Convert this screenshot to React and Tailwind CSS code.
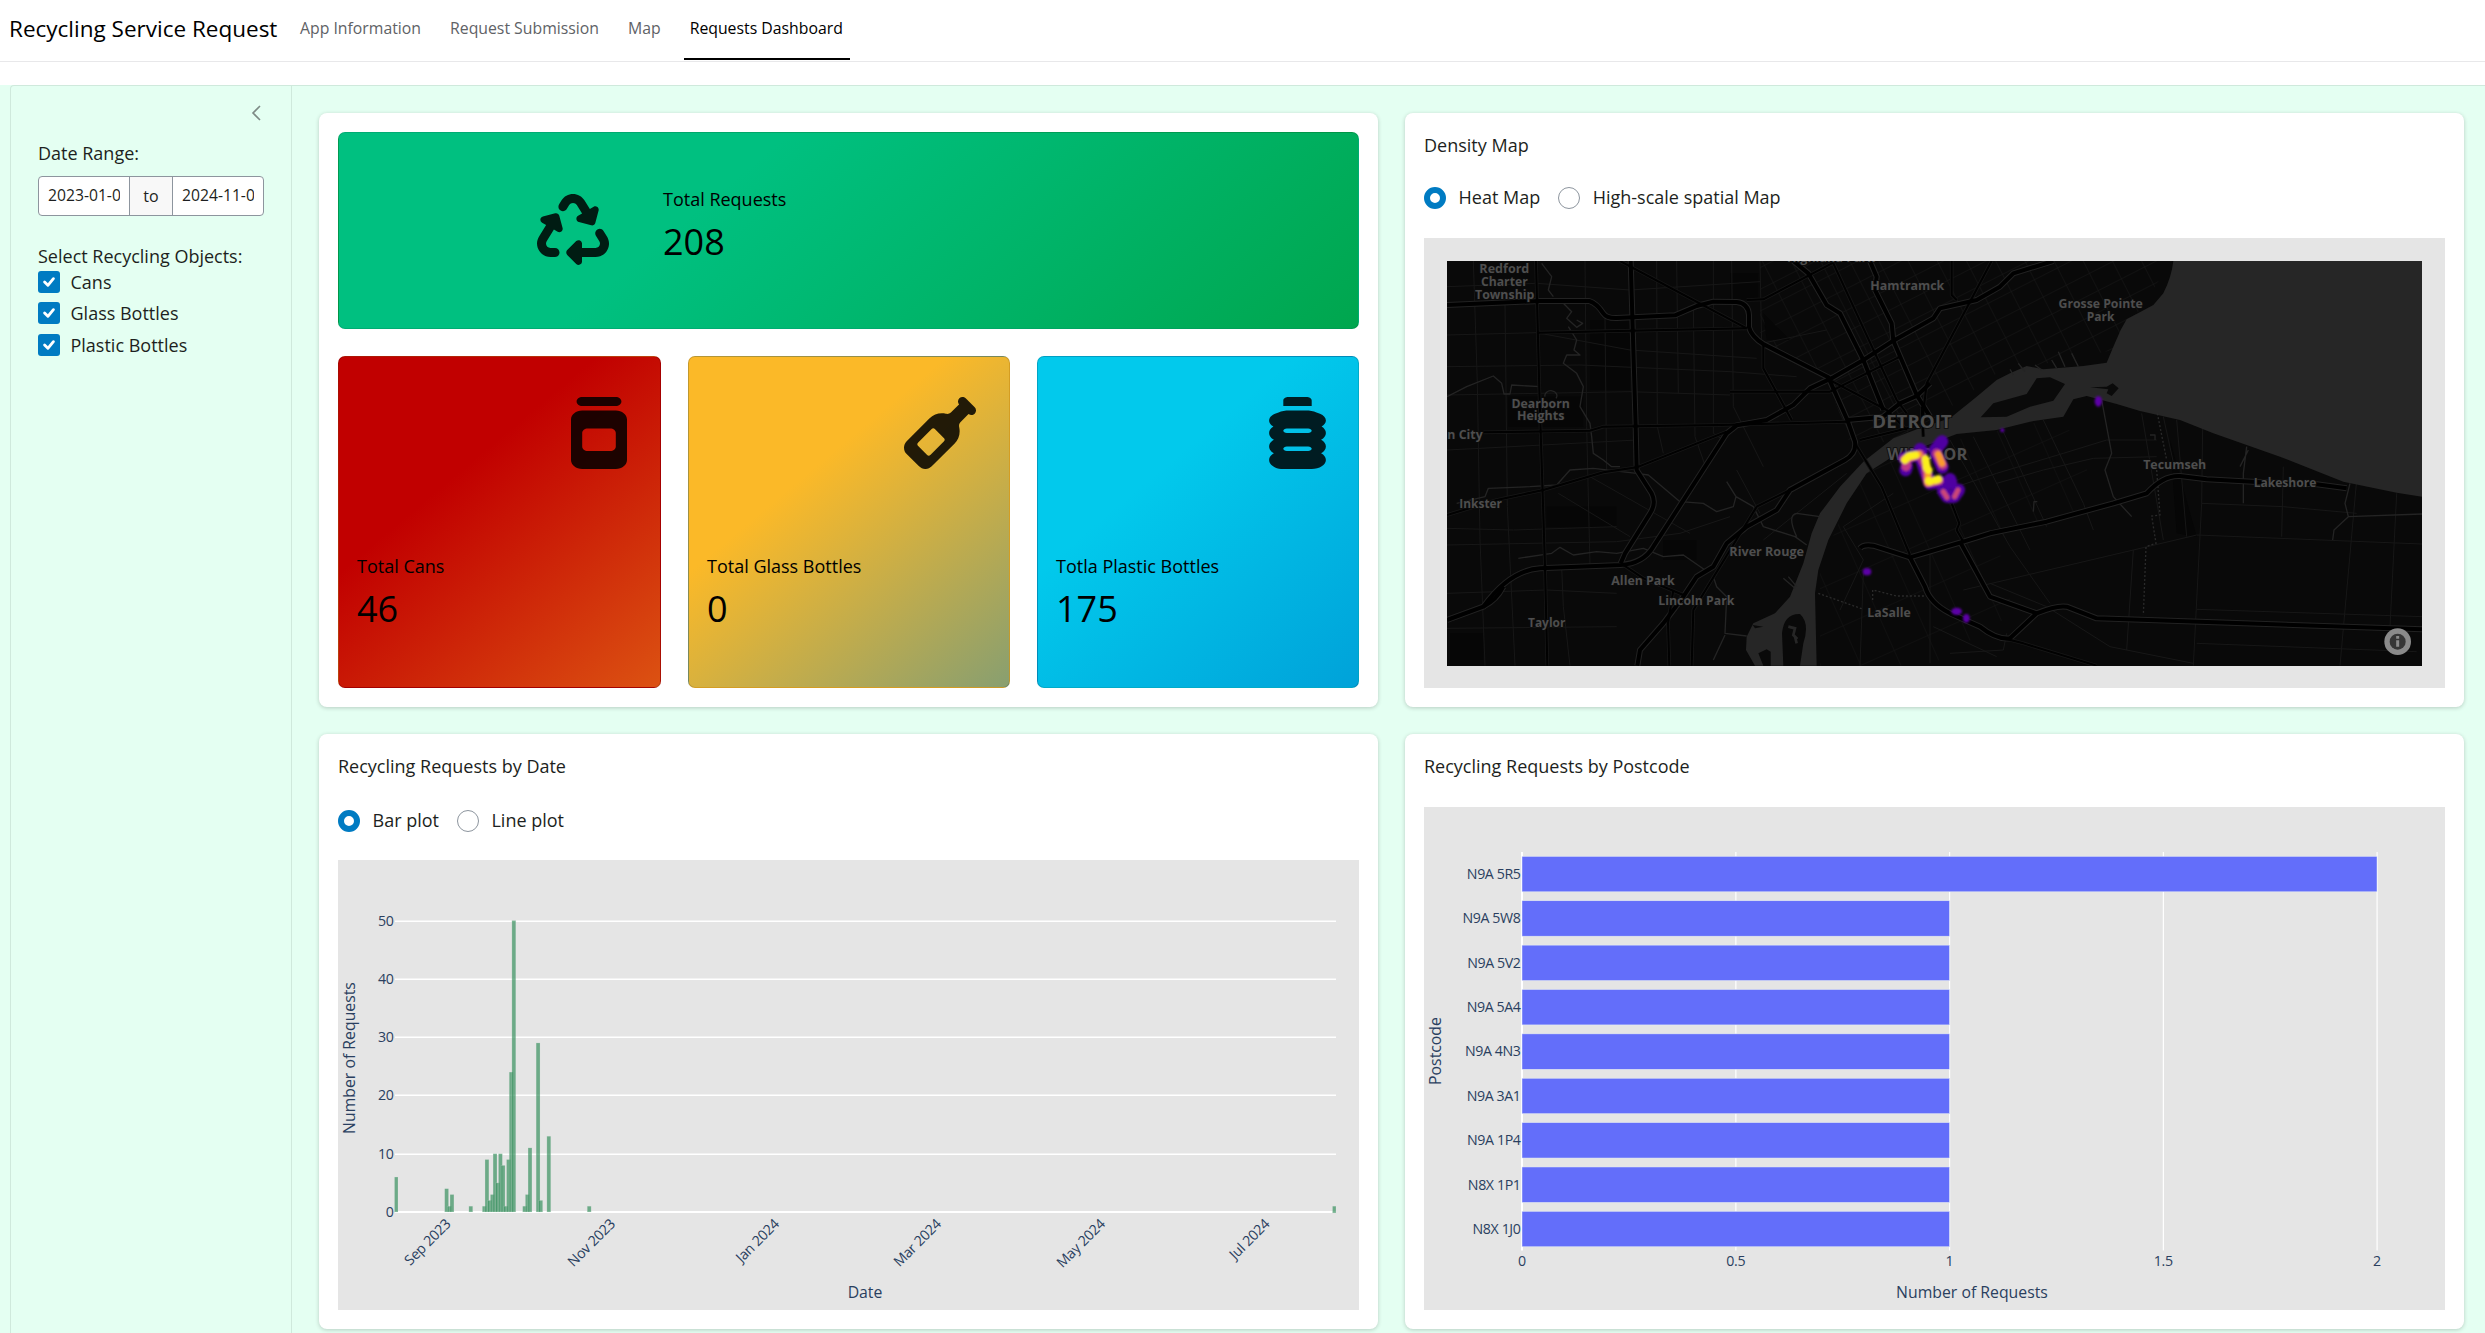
import React from "react";
import { FaRecycle, FaJar, FaWineBottle, FaBottleWater } from "react-icons/fa6";

const dayBars = [
  [19, 4], [20, 1], [21, 3], [28, 1], [33, 1], [34, 9], [35, 2], [36, 3], [37, 10],
  [38, 5], [39, 10], [40, 8], [41, 1], [42, 9], [43, 24], [44, 50], [48, 1], [49, 3],
  [50, 11], [53, 29], [54, 2], [57, 13], [72, 1],
];
const months = [["Sep 2023", 451], ["Nov 2023", 615.5], ["Jan 2024", 779.5], ["Mar 2024", 941.5], ["May 2024", 1105.5], ["Jul 2024", 1270]];
const postcodes = ["N9A 5R5", "N9A 5W8", "N9A 5V2", "N9A 5A4", "N9A 4N3", "N9A 3A1", "N9A 1P4", "N8X 1P1", "N8X 1J0"];

const INK = "#2a3f5f";

function Radio({ label, on }) {
  return (
    <div className="flex items-center">
      {on ? (
        <span className="h-[22px] w-[22px] rounded-full border-[6px] border-[#007bc2] bg-white" />
      ) : (
        <span className="h-[22px] w-[22px] rounded-full border border-[#8d959e] bg-white" />
      )}
      <span className="relative -top-px ml-[12.5px]">{label}</span>
    </div>
  );
}

function Check({ label }) {
  return (
    <div className="flex h-[31.5px] items-center">
      <span className="flex h-[22px] w-[22px] items-center justify-center rounded-[3px] bg-[#007bc2]">
        <svg viewBox="0 0 20 20" className="h-[22px] w-[22px]" fill="none" stroke="#fff" strokeWidth="2.6" strokeLinecap="round" strokeLinejoin="round">
          <path d="M6 10l3 3 5-6" />
        </svg>
      </span>
      <span className="ml-[10.5px]">{label}</span>
    </div>
  );
}

function Card({ children }) {
  return <section className="flex min-w-0 flex-col rounded-lg bg-white px-[19px] pb-[19px] shadow-[0_1px_4px_rgba(0,0,0,0.2)]">{children}</section>;
}

function SmallBox({ label, value, icon, tone }) {
  return (
    <div className={"flex min-w-0 flex-col justify-between rounded-[7px] border border-black/15 px-[18px] pb-[57px] pt-[40px] text-black " + tone}>
      <div className="flex h-[72px] justify-end pr-[15px] opacity-85">{icon}</div>
      <div>
        <div className="leading-[26px]">{label}</div>
        <div className="mt-[9px] text-[36px] leading-[42px]">{value}</div>
      </div>
    </div>
  );
}

function DateChart() {
  const y = (v) => 1212 - v * 5.83;
  return (
    <svg viewBox="338 860 1021 450" className="h-[450px] w-[1021px]">
      <rect x="338" y="860" width="1021" height="450" fill="#e5e5e5" />
      {[10, 20, 30, 40, 50].map((v) => (
        <rect key={v} x="395" y={Math.round(y(v)) - 0.5} width="941" height="1.5" fill="#fff" />
      ))}
      <rect x="395" y="1211" width="941" height="2" fill="#fff" />
      <g fill="#2e8b57" fillOpacity="0.66" stroke="#e5e5e5" strokeOpacity="0.35" strokeWidth="0.6">
        <rect x="394.5" y={y(6)} width="3.5" height="35" />
        {dayBars.map(([d, v]) => (
          <rect key={d} x={395.5 + d * 2.69 - 1.95} y={y(v)} width="3.9" height={v * 5.83} />
        ))}
        <rect x="1332.5" y={y(1)} width="3.5" height="6.8" />
      </g>
      <g fill={INK} fontSize="14.2" letterSpacing="-0.3" textAnchor="end">
        {[0, 10, 20, 30, 40, 50].map((v) => (
          <text key={v} x="393.5" y={y(v) + 5}>{v}</text>
        ))}
        {months.map(([m, x]) => (
          <text key={m} transform={`translate(${x + 0.5} 1225) rotate(-45)`}>{m}</text>
        ))}
      </g>
      <g fill={INK} fontSize="15.8" textAnchor="middle">
        <text x="865" y="1298">Date</text>
        <text transform="translate(355 1058) rotate(-90)">Number of Requests</text>
      </g>
    </svg>
  );
}

function PostcodeChart() {
  return (
    <svg viewBox="1424 807 1021 503" className="h-[503px] w-[1021px]">
      <rect x="1424" y="807" width="1021" height="503" fill="#e5e5e5" />
      {[0, 1, 2, 3, 4].map((i) => (
        <rect key={i} x={1522 + i * 213.75 - (i ? 0.5 : 1)} y="852" width={i ? 1.2 : 2} height="398.500" fill="#fff" />
      ))}
      {postcodes.map((p, i) => (
        <g key={p}>
          <rect x="1522" y={856.4 + i * 44.37} width={i ? 427.5 : 855} height="35.4" fill="#636efa" stroke="#e5ecf6" strokeWidth="0.5" />
          <text x="1520.5" y={879 + i * 44.37} textAnchor="end" fontSize="14.2" letterSpacing="-0.4" fill={INK}>{p}</text>
        </g>
      ))}
      <g fill={INK} fontSize="14.2" letterSpacing="-0.3" textAnchor="middle">
        {["0", "0.5", "1", "1.5", "2"].map((t, i) => (
          <text key={t} x={1522 + i * 213.75} y="1266">{t}</text>
        ))}
      </g>
      <g fill={INK} fontSize="15.8" textAnchor="middle">
        <text x="1972" y="1298">Number of Requests</text>
        <text transform="translate(1441 1051) rotate(-90)">Postcode</text>
      </g>
    </svg>
  );
}

const highways = [
  "M51 195L330 183L478 183Q500 190 520 220Q530 235 560 234L735 226L800 198L850 185L920 186Q955 190 957 225L957 262Q965 290 1000 312L1195 412L1252 540L1275 605Q1280 640 1245 660L1080 750L1040 810L950 860L890 910L850 980L800 1010L760 1070L700 1150L630 1230L622 1277",
  "M602 63L617 560L620 690L665 760Q680 790 660 820L585 940L572 970",
  "M51 1140L160 1100Q240 990 330 985L572 975Q640 970 670 920L890 580L920 556L1010 540L1090 495L1140 445L1210 412L1300 360L1390 302L1510 235L1530 205L1640 180L1710 140L1750 100L1870 63",
  "M1090 63L1135 100L1190 195L1230 220L1300 360L1360 510",
  "M1320 63L1340 110L1335 150L1385 250L1390 302L1460 465L1500 530",
  "M1252 540L1360 530L1410 490L1460 468L1500 430",
  "M1290 925Q1300 912 1330 917L1440 952L1600 905L1680 880L1850 845L2050 790L2150 760Q2200 705 2250 708L2330 718L2480 726L2660 733L2750 745",
  "M1440 952L1485 1040Q1500 1090 1560 1120L1650 1160Q1700 1200 1740 1195L1820 1120Q1880 1095 1910 1100L2000 1135L2976 1168",
  "M1590 905L1680 1070L1820 1120",
  "M160 1100Q200 1080 220 1040",
];
const roads = [
  "M318 63L328 450L345 980L352 1277", "M51 825L200 780L340 750L520 697L620 682L890 575",
  "M160 577L480 572L520 560L870 555L1250 545", "M322 278L950 265", "M570 63L950 265", "M1190 415L1370 510L1430 570",
  "M950 180L1000 178L1210 68", "M1000 312L1000 385L1085 540", "M1210 70L1400 480L1430 520", "M1475 560L1490 430L1685 63",
  "M1565 63L1565 165L1580 180", "M900 455L1200 455L1410 350", "M1275 610L1355 740L1440 945", "M1565 790L1588 850L1580 870L1600 905",
  "M718 1277L714 1150L730 1050", "M785 1277L790 1110L980 800L1080 750", "M1720 1195L1780 1210L2000 1277", "M580 975L640 1015L760 1065",
  "M1480 590L1475 500", "M1290 600L1450 560",
];
const thinRoads = [
  "M130 63L142 430L150 900L165 1277", "M225 190L232 800L255 1277", "M395 980L400 1100L420 1277", "M465 63L470 560L480 980",
  "M525 234L530 700", "M680 63L682 560L700 640", "M740 63L745 460", "M790 200L795 590L830 690", "M850 63L850 580L880 600",
  "M905 63L910 500L1000 680", "M990 63L995 310L1190 270", "M51 285L320 278L600 330L980 355", "M51 380L450 375L900 395L1100 410", "M51 465L600 455L900 465",
  "M51 630L150 625L620 600", "M51 865L250 870L560 860", "M51 915L560 905L750 880L900 830", "M51 1060L350 1050L560 1060",
  "M51 1165L560 1160", "M51 140L320 130L600 150L990 125", "M385 760L600 890", "M480 710L780 880", "M920 690L990 820",
  "M1560 600L1740 920L1860 1090", "M1630 590L1800 930", "M1720 575L1850 860", "M1840 540L1960 790L1990 870", "M1700 730L1840 690L1990 655L2180 650",
  "M1520 760L1700 700L1900 640L2030 600L2180 600", "M1600 1050L2110 930L2300 885L2976 912", "M2110 930L2090 1230", "M2318 560L2315 790L2290 1277",
  "M2300 1108L2976 1130", "M2560 680L2555 890", "M2315 790L2560 800L2780 820", "M2780 720L2730 1277", "M2900 760L2880 1160", "M2300 1210L2960 1235",
  "M2240 540L2270 890", "M2200 530L2235 690", "M2135 520L2200 900", "M1500 940L1500 1270", "M1300 1000L1290 1277", "M1390 760L1240 860L1300 960L1230 1110",
  "M1510 1160L1700 1250", "M1680 1030L1850 1100L2040 1220L2290 1270", "M1560 1240L1720 1230L1730 1180", "M1000 900L1250 700",
];
const river = "M2230 63Q2225 110 2200 160L2170 195L2090 238L2072 270L2050 320L2030 368L1960 378L1840 388L1790 378L1740 400L1700 420L1640 470L1560 535L1480 560L1390 595L1300 665L1230 740L1170 820L1145 880L1120 970L1080 1070L1035 1120L970 1150L950 1190L948 1230L975 1277L1000 1277L985 1240L1010 1228L1022 1235L1022 1277L1060 1277L1056 1180Q1062 1120 1110 1122Q1140 1150 1120 1210L1110 1277L1160 1277L1155 1060L1165 990L1195 900L1250 790L1310 700L1380 655L1480 620L1580 582L1700 570L1800 545L1900 530L1930 478L1970 468L2060 492L2130 513L2250 540L2350 580L2550 650L2740 725L2900 758L2976 770L2976 63Z";
const islands = ["M1652 532L1690 490L1790 462L1820 415L1860 412L1905 432L1870 482L1800 500L1730 530Z", "M1980 442L2030 440L2048 430L2066 445L2045 468L2030 460L2035 448Z", "M968 1155L1000 1160L975 1165Z"];
const streams = [
  "M335 70L365 110L355 150L370 170", "M400 190L425 215L410 235L440 262L458 250L440 240M415 260L440 300L432 330L450 345L410 345L400 370L440 400L460 440L450 500L480 550L485 590L490 640L520 660L545 680L570 680",
  "M51 470L110 440L190 408L215 430L222 462L240 462L245 435L330 440M345 470A18 15 0 1 1 378 475",
  "M80 790L165 770L175 745L300 740L380 735L420 690L490 685L620 700L655 705L750 785L820 790L860 815L910 800L918 770L890 725M918 770L970 800L1000 860L1095 890L1130 915M1170 830L1100 820Q1070 825 1100 890",
  "M265 955L365 940L390 922L430 945L500 935L560 940L640 925L700 950L760 945L825 990M850 1010L860 1040L890 1070L885 1180L950 1188M885 1185L850 1260",
  "M2015 480L2045 640L2025 690L2050 770L2105 830", "M2450 620L2440 700L2440 790M2455 630L2430 680", "M2760 730L2745 790L2755 830L2712 870L2708 900M2755 830L2976 822",
  "M1885 335L1905 380M1925 340L1945 380M1865 360L1880 385M1815 375L1835 390M1765 370L1785 395M1740 388L1750 405", "M1810 815L1812 785L1822 785M2160 585L2175 585L2175 600", "M1060 1015L1095 1045M1075 1010L1100 1040",
];
const places = [
  ["Redford", 223, 100, 150], ["Charter", 223, 139, 140], ["Township", 224, 178, 178], ["Hamtramck", 1432, 149, 222], ["Grosse Pointe", 2012, 205, 253],
  ["Park", 2012, 244, 83], ["Dearborn", 332, 503, 175], ["Heights", 332, 541, 142], ["n City", 105, 598, 106], ["Inkster", 152, 805, 128],
  ["River Rouge", 1010, 948, 224], ["Allen Park", 639, 1036, 190], ["Lincoln Park", 799, 1095, 228], ["Taylor", 350, 1160, 112], ["LaSalle", 1377, 1132, 130],
  ["Tecumseh", 2234, 688, 189], ["Lakeshore", 2565, 741, 188], ["Highland Park", 1203, 66, 264],
];
const heat = {
  low: "M1423 655L1470 642L1485 690L1500 730L1530 725M1518 640L1537 682M1430 680L1427 690M1515 630L1536 605M1540 752L1552 770L1572 770L1586 750M1560 718L1563 728M1470 628L1475 632",
  mid: "M1423 657L1470 643L1488 680L1493 728L1527 722M1520 640L1538 676M1430 672L1428 680",
  rim: "M1540 755L1551 772M1574 770L1584 750",
  hot: "M1424 658L1467 643M1486 655L1494 688L1494 728L1525 720M1525 643L1536 670",
  max: "M1425 660L1436 648L1456 645M1487 658L1491 685L1496 690M1496 722L1500 724M1517 720L1524 717",
};

function DensityMap() {
  return (
    <svg viewBox="51 63 2925 1215" className="h-[405px] w-[975px] bg-[#090909]">
      <defs>
        <filter id="soft" x="-20%" y="-20%" width="140%" height="140%"><feGaussianBlur stdDeviation="3.5" /></filter>
        <pattern id="blocks" width="78" height="58" patternUnits="userSpaceOnUse" patternTransform="rotate(-27)">
          <path d="M0 0H78M0 0V58" stroke="#191919" strokeWidth="3" fill="none" />
        </pattern>
        <pattern id="south" width="110" height="130" patternUnits="userSpaceOnUse" patternTransform="rotate(-24)">
          <path d="M0 0H110M0 0V130" stroke="#151515" strokeWidth="3" fill="none" />
        </pattern>
      </defs>
      <path d="M990 63H2225L2050 330L1700 400L1480 560L1390 595L1270 640L1190 412L990 312Z" fill="url(#blocks)" />
      <path d="M1290 700L1480 620L1900 530L2020 800L1700 900L1750 1120L1500 1277H1170V980Z" fill="url(#south)" />
      <g fill="#060606">
        <path d="M235 470H460V560H235ZM350 800H560V860H350ZM480 240H600V450H480ZM900 100H985V180H900ZM2220 600L2300 890L2240 880ZM700 900H800V960H700ZM60 1180H160V1260H60ZM1000 220L1080 300L1010 300Z" />
      </g>
      <g fill="none" stroke="#171717" strokeWidth="3">{thinRoads.map((d) => <path key={d} d={d} />)}</g>
      <path d={river} fill="#262626" />
      <g fill="#0a0a0a">{islands.map((d) => <path key={d} d={d} />)}</g>
      <path d="M1075 1160l20 5-5 20 12 12M1095 1190l5 20" stroke="#262626" strokeWidth="8" fill="none" />
      <g fill="none" stroke="#242424" strokeWidth="4" strokeLinejoin="round">{streams.map((d) => <path key={d} d={d} />)}</g>
      <path d="M2182 520L2210 660M2180 690L2190 825L2165 828L2178 910L2148 920L2140 1125M1165 1060L1300 1108M1328 1080V1050L1400 1068H1490" fill="none" stroke="#2a2a2a" strokeWidth="4" strokeDasharray="6 6" />
      <g fill="none" strokeLinejoin="round">
        {highways.map((d) => <path key={d} d={d} stroke="#222" strokeWidth="18" />)}
        {roads.map((d) => <path key={d} d={d} stroke="#161616" strokeWidth="11" />)}
        {roads.map((d) => <path key={d} d={d} stroke="#010101" strokeWidth="6" />)}
        {highways.map((d) => <path key={d} d={d} stroke="#000" strokeWidth="12" />)}
      </g>
      <g fill="#4e4e4e" stroke="#0c0c0c" strokeWidth="5" paintOrder="stroke" textAnchor="middle" fontWeight="700" fontSize="39">
        {places.map(([t, x, y, w]) => <text key={t} x={x} y={y} textLength={w} lengthAdjust="spacingAndGlyphs">{t}</text>)}
        <g fontSize="54">
          <text x="1446" y="564" textLength="238" lengthAdjust="spacingAndGlyphs">DETROIT</text>
          <text x="1492" y="660" fontSize="48" textLength="240" lengthAdjust="spacingAndGlyphs">WINDSOR</text>
        </g>
      </g>
      <g fill="none" strokeLinecap="round" strokeLinejoin="round" filter="url(#soft)">
        <path d={heat.low} stroke="#4f02a2" strokeWidth="38" />
        <path d={heat.mid} stroke="#bd3786" strokeWidth="27" />
        <path d={heat.rim} stroke="#cc4778" strokeWidth="15" />
        <path d={heat.hot} stroke="#fb9a2d" strokeWidth="20" />
        <path d={heat.max} stroke="#fbf01f" strokeWidth="23" />
      </g>
      <g fill="#5c01a6" filter="url(#soft)">
        <ellipse cx="1311" cy="995" rx="13" ry="11" />
        <ellipse cx="2005" cy="484" rx="11" ry="16" />
        <ellipse cx="1580" cy="1114" rx="16" ry="11" />
        <ellipse cx="1609" cy="1135" rx="10" ry="13" />
        <circle cx="1717" cy="571" r="6" />
      </g>
      <circle cx="2903" cy="1205" r="40" fill="#8a8a8a" />
      <circle cx="2903" cy="1205" r="24" fill="#363636" />
      <path d="M2903 1188v8M2903 1201v19" stroke="#8a8a8a" strokeWidth="9" />
    </svg>
  );
}

export default function App() {
  return (
    <div className="h-[1333px] w-full overflow-hidden bg-white font-['Open_Sans',sans-serif] text-[18px] leading-[26px] text-[#1d1f21]">
      <header className="flex h-[62px] border-b border-[#e8e8ea] pl-[9px]">
        <h1 className="mt-[14px] mr-[9px] w-[276px] whitespace-nowrap text-[22.5px] leading-[30px] text-black">Recycling Service Request</h1>
        <nav className="flex gap-[17px] whitespace-nowrap text-[15.8px] leading-[26px] text-[#606266]">
          <span className="px-[6px] pt-[15px]">App Information</span>
          <span className="px-[6px] pt-[15px]">Request Submission</span>
          <span className="px-[6px] pt-[15px]">Map</span>
          <span className="h-[60px] w-[166px] border-b-2 border-black px-[6px] pt-[15px] text-black">Requests Dashboard</span>
        </nav>
      </header>
      <div className="mt-[23px] bg-[#e4fff2] pl-[10px]">
        <div className="flex h-[1248px] rounded-tl-[4px] border-l border-t border-[#cfe9dc]">
          <aside className="w-[281px] border-r border-[#cfe9dc] pl-[27px]">
            <div className="flex h-[53px] items-end justify-end pr-[30px]">
              <svg viewBox="0 0 10 16" className="mb-[18px] h-[16px] w-[10px]" fill="none" stroke="#7d8a85" strokeWidth="1.6"><path d="M9 1L2 8l7 7" /></svg>
            </div>
            <div className="pt-px">Date Range:</div>
            <div className="mt-[10px] flex h-[40px] w-[226px] overflow-hidden rounded-[4px] border border-[#8d959e] bg-white text-[15.7px] leading-[37px]">
              <div className="w-[90px] whitespace-nowrap px-[9px]"><div className="overflow-hidden">2023-01-01</div></div>
              <div className="w-[44px] border-x border-[#8d959e] bg-[#f8f8f8] text-center text-[16px] leading-[39px]">to</div>
              <div className="w-[90px] whitespace-nowrap px-[9px]"><div className="overflow-hidden">2024-11-01</div></div>
            </div>
            <div className="mt-[27px]">Select Recycling Objects:</div>
            <div className="-mt-[3px]">
              <Check label="Cans" />
              <Check label="Glass Bottles" />
              <Check label="Plastic Bottles" />
            </div>
          </aside>
          <main className="grid flex-1 grid-cols-[1059px_1059px] grid-rows-[594px_595px] gap-[27px] pl-[27px] pt-[27px]">
            <Card>
              <div className="mt-[19px] flex h-[197px] items-center rounded-[7px] border border-black/10 bg-[linear-gradient(140deg,#00c080_36%,#00a64e_100%)] pl-[198px] text-black">
                <FaRecycle className="-mt-[2px] h-[72px] w-[72px] opacity-85" />
                <div className="ml-[54px] -mt-[13px]">
                  <div>Total Requests</div>
                  <div className="mt-[9px] text-[36px] leading-[42px]">208</div>
                </div>
              </div>
              <div className="mt-[27px] grid flex-1 grid-cols-[323px_322px_322px] gap-[27px]">
                <SmallBox label="Total Cans" value="46" tone="bg-[linear-gradient(140deg,#c10000_36%,#dc5212_100%)]" icon={<FaJar preserveAspectRatio="none" className="h-[72px] w-[56px]" />} />
                <SmallBox label="Total Glass Bottles" value="0" tone="bg-[linear-gradient(140deg,#fbb928_36%,#889f70_100%)]" icon={<FaWineBottle className="h-[72px] w-[72px]" />} />
                <SmallBox label="Totla Plastic Bottles" value="175" tone="bg-[linear-gradient(140deg,#02c9ec_36%,#00a2d9_100%)]" icon={<FaBottleWater preserveAspectRatio="none" className="-mr-[8px] h-[72px] w-[71px]" />} />
              </div>
            </Card>
            <Card>
              <div className="mt-[19px]">Density Map</div>
              <div className="mt-[29px] flex h-[22px] gap-[18px]"><Radio on label="Heat Map" /><Radio label="High-scale spatial Map" /></div>
              <div className="mt-[29px] flex h-[450px] w-[1021px] items-start justify-center bg-[#e5e5e5] pt-[23px]">
                <DensityMap />
              </div>
            </Card>
            <Card>
              <div className="mt-[19px]">Recycling Requests by Date</div>
              <div className="mt-[31px] mb-[28px] flex h-[22px] gap-[18px]"><Radio on label="Bar plot" /><Radio label="Line plot" /></div>
              <DateChart />
            </Card>
            <Card>
              <div className="mt-[19px] mb-[28px]">Recycling Requests by Postcode</div>
              <PostcodeChart />
            </Card>
          </main>
        </div>
      </div>
    </div>
  );
}
